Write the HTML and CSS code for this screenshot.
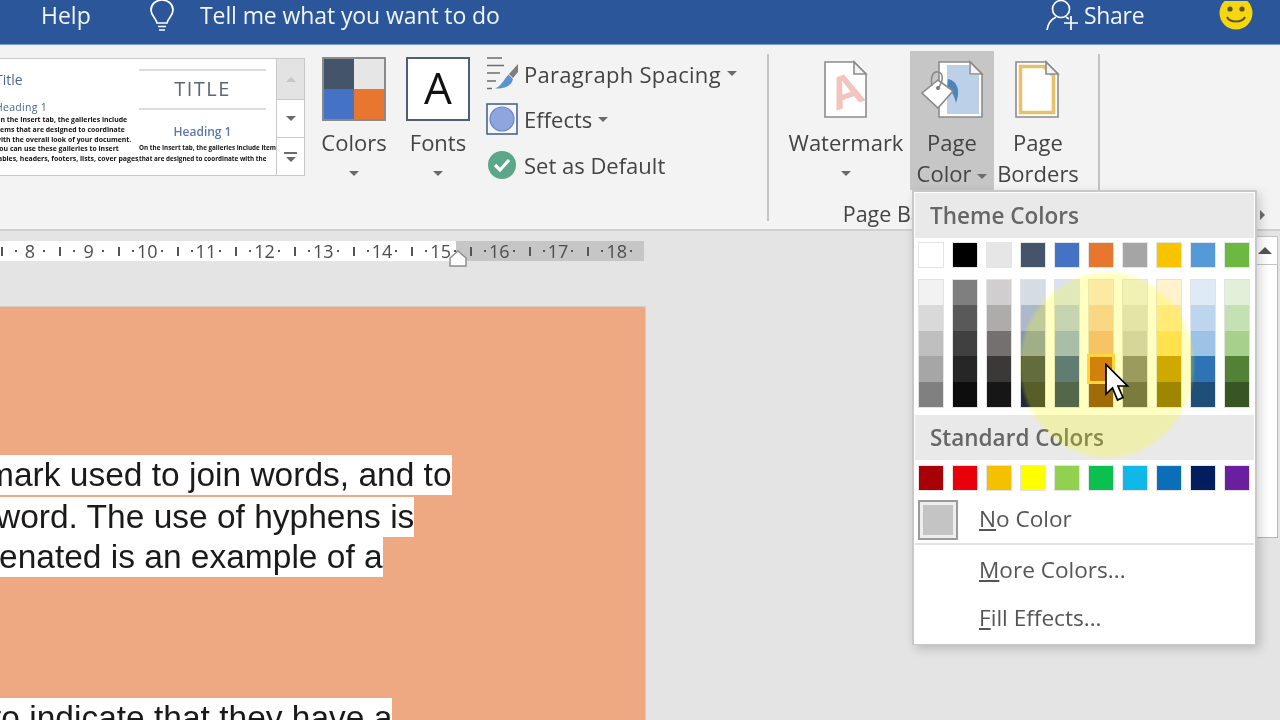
FILE: index.html
```html
<!DOCTYPE html>
<html lang="en">
<head>
<meta charset="utf-8">
<title>Page Color</title>
<link rel="stylesheet" href="styles.css">
</head>
<body>
<div class="app">
  <header class="titlebar">
    <span class="tb-help">Help</span>
    <svg class="tb-bulb" width="26" height="33" viewBox="0 0 26 33" fill="none" stroke="#fff" stroke-width="1.7"><path d="M8 24 C7 19 2 17 2 11 C2 5 7 1 13 1 C19 1 24 5 24 11 C24 17 19 19 18 24 Z"/><path d="M9 27.5 H17 M10 31 H16"/></svg>
    <span class="tb-tell">Tell me what you want to do</span>
    <svg class="tb-person" width="32" height="32" viewBox="0 0 32 32" fill="none" stroke="#fff" stroke-width="1.7"><circle cx="15" cy="10" r="8.5"/><path d="M1 31 C2 24 6 20 10 18 M20 18 L23 20"/><path d="M25 17 V31 M18 24 H32"/></svg>
    <span class="tb-share">Share</span>
    <svg class="tb-smile" width="34" height="32" viewBox="0 0 34 32"><circle cx="17" cy="12" r="16.5" fill="#f5d60f"/><circle cx="11" cy="8" r="2.6" fill="#5b5320"/><circle cx="23" cy="8" r="2.6" fill="#5b5320"/><path d="M8 16 C11 22 23 22 26 16" fill="none" stroke="#5b5320" stroke-width="2"/></svg>
  </header>

  <section class="ribbon">
    <div class="gallery">
      <div class="thumbs">
        <div class="thumb thumb-a">
          <div class="ta-title">Title</div>
          <div class="ta-head">Heading 1</div>
          <div class="ta-line">On the Insert tab, the galleries include</div>
          <div class="ta-line">items that are designed to coordinate</div>
          <div class="ta-line">with the overall look of your document.</div>
          <div class="ta-line">You can use these galleries to insert</div>
          <div class="ta-line">tables, headers, footers, lists, cover pages,</div>
        </div>
        <div class="thumb thumb-b">
          <div class="tb-title">TITLE</div>
          <div class="tb-head">Heading 1</div>
          <div class="tb-line">On the Insert tab, the galleries include items</div>
          <div class="tb-line">that are designed to coordinate with the</div>
        </div>
      </div>
      <div class="scroller">
        <div class="sc sc-up"><i class="tri tri-up"></i></div>
        <div class="sc sc-down"><i class="tri"></i></div>
        <div class="sc sc-more"><b class="sc-bar"></b><i class="tri"></i></div>
      </div>
    </div>

    <div class="big big-colors">
      <div class="colors-icon"><i class="k-44546a"></i><i class="k-e7e6e6"></i><i class="k-4472c4"></i><i class="k-e8762f"></i></div>
      <span class="big-label">Colors</span>
      <i class="tri tri-big"></i>
    </div>
    <div class="big big-fonts">
      <div class="fonts-icon">A</div>
      <span class="big-label">Fonts</span>
      <i class="tri tri-big"></i>
    </div>

    <div class="smalls">
      <div class="small">
        <svg class="small-icon" width="32" height="34" viewBox="0 0 32 34" fill="none"><path d="M1 1 H16 M1 8.5 H18 M1 16 H14 M1 24 H10 M1 31.5 H6" stroke="#6d6d6d" stroke-width="1.6"/><path d="M32 7 L23 17 L27 21 L32 15 Z" fill="#7d7d7d"/><path d="M22.5 17.5 L27 22 C26 28 20 32 9 31.5 C15 29 17 24 22.5 17.5 Z" fill="#5b93cf"/></svg>
        <span class="wide">Paragraph Spacing</span><i class="tri tri-small"></i>
      </div>
      <div class="small">
        <svg class="small-icon" width="32" height="32" viewBox="0 0 32 32"><rect x="1" y="1" width="30" height="30" fill="#f6f6f6" stroke="#4a6497" stroke-width="1.6"/><circle cx="16" cy="16" r="12" fill="#8fa5dd" stroke="#6d86cb" stroke-width="1.2"/></svg>
        <span>Effects</span><i class="tri tri-small"></i>
      </div>
      <div class="small">
        <svg class="small-icon" width="32" height="30" viewBox="0 0 32 30"><circle cx="16" cy="15" r="14" fill="#5ba78a"/><path d="M9 15 L14 20 L23 10" fill="none" stroke="#fff" stroke-width="3.2"/></svg>
        <span>Set as Default</span>
      </div>
    </div>

    <div class="sep sep-a"></div>

    <div class="page-group">
      <div class="page-btns">
        <div class="big big-water">
          <svg class="doc-icon" width="64" height="64" viewBox="0 0 64 64" fill="none"><path d="M11 5 H40 L52 17 V60 H11 Z" fill="#fff" stroke="#8c8c8c" stroke-width="1.6"/><path d="M40 5 V17 H52 L40 5 Z" stroke="#8c8c8c" stroke-width="1.6" fill="#f3f3f3"/><text class="water-a" x="15" y="50" transform="rotate(-20 30 34)">A</text></svg>
          <span class="big-label">Watermark</span>
          <i class="tri tri-big"></i>
        </div>
        <div class="big big-color">
          <svg class="doc-icon" width="64" height="64" viewBox="0 0 64 64" fill="none"><path d="M19 5 H50 L62 17 V60 H19 Z" fill="#fff" stroke="#8c8c8c" stroke-width="1.6"/><path d="M27 8 H49 V18 H59 V57 H27 Z" fill="#bcd0e8"/><path d="M50 5 V17 H62 L50 5 Z" stroke="#8c8c8c" stroke-width="1.6" fill="#f3f3f3"/><path d="M28 22 C37 24 41 33 36 46 C34 38 32 34 27 31 Z" fill="#4a86bb"/><path d="M2 36 L18 23 L33 34 L18 51 Z" fill="#fff" stroke="#8a8a8a" stroke-width="1.6"/><path d="M12 29 C10 18 14 14 18 15 C23 16 24 22 19 30" stroke="#8a8a8a" stroke-width="1.6"/><circle cx="18" cy="31" r="2" fill="#777"/></svg>
          <span class="big-label two">Page<br>Color<i class="tri tri-inline"></i></span>
        </div>
        <div class="big big-borders">
          <svg class="doc-icon" width="64" height="64" viewBox="0 0 64 64" fill="none"><path d="M10 5 H40 L52 17 V60 H10 Z" fill="#fff" stroke="#8c8c8c" stroke-width="1.6"/><path d="M14.500 9.500 H38 L47.500 19 V55.500 H14.500 Z" stroke="#e8c16c" stroke-width="3.600"/><path d="M40 5 V17 H52 L40 5 Z" stroke="#8c8c8c" stroke-width="1.6" fill="#f3f3f3"/></svg>
          <span class="big-label two">Page<br>Borders</span>
        </div>
      </div>
      <div class="group-label">Page Background</div>
    </div>

    <div class="sep sep-b"></div>
    <i class="expand"></i>
  </section>

  <section class="workspace">
    <div class="doc">
      <div class="ruler">
        <div class="rc"><i class="bar"></i><i class="dot"></i><b>8</b><i class="dot"></i></div>
        <div class="rc"><i class="bar"></i><i class="dot"></i><b>9</b><i class="dot"></i></div>
        <div class="rc"><i class="bar"></i><i class="dot"></i><b>10</b><i class="dot"></i></div>
        <div class="rc"><i class="bar"></i><i class="dot"></i><b>11</b><i class="dot"></i></div>
        <div class="rc"><i class="bar"></i><i class="dot"></i><b>12</b><i class="dot"></i></div>
        <div class="rc"><i class="bar"></i><i class="dot"></i><b>13</b><i class="dot"></i></div>
        <div class="rc"><i class="bar"></i><i class="dot"></i><b>14</b><i class="dot"></i></div>
        <div class="rc"><i class="bar"></i><i class="dot"></i><b>15</b><i class="dot"></i></div>
        <div class="rc"><i class="bar"></i><i class="dot"></i><b>16</b><i class="dot"></i></div>
        <div class="rc"><i class="bar"></i><i class="dot"></i><b>17</b><i class="dot"></i></div>
        <div class="rc"><i class="bar"></i><i class="dot"></i><b>18</b><i class="dot"></i></div>
        <svg class="indent" width="18" height="17" viewBox="0 0 18 17"><path d="M9 1 L17 8 V16 H1 V8 Z" fill="#fff" stroke="#8a8a8a" stroke-width="1.4"/></svg>
      </div>
      <div class="page">
        <p class="sel-line first">mark used to join words, and to</p>
        <p class="sel-line second">word. The use of hyphens is</p>
        <p class="sel-line third">enated is an example of a</p>
        <p class="sel-line last">to indicate that they have a</p>
      </div>
    </div>
    <div class="vscroll">
      <div class="vs-btn"><i class="tri tri-up tri-dark"></i></div>
      <div class="vs-thumb"></div>
    </div>
  </section>

  <aside class="menu">
    <div class="menu-head">Theme Colors</div>
    <div class="swatches">
      <i class="k-ffffff"></i><i class="k-000000"></i><i class="k-e7e6e6"></i><i class="k-44546a"></i><i class="k-4472c4"></i><i class="k-e8762f"></i><i class="k-a5a5a5"></i><i class="k-ffc000"></i><i class="k-5b9bd5"></i><i class="k-70ad47"></i>
    </div>
    <div class="shades">
      <div class="col"><i class="k-f2f2f2"></i><i class="k-d9d9d9"></i><i class="k-bfbfbf"></i><i class="k-a6a6a6"></i><i class="k-808080"></i></div>
      <div class="col"><i class="k-7f7f7f"></i><i class="k-595959"></i><i class="k-404040"></i><i class="k-262626"></i><i class="k-0d0d0d"></i></div>
      <div class="col"><i class="k-d0cece"></i><i class="k-aeabab"></i><i class="k-757070"></i><i class="k-3b3838"></i><i class="k-171616"></i></div>
      <div class="col"><i class="k-d6dce4"></i><i class="k-adb9ca"></i><i class="k-8496b0"></i><i class="k-323f4f"></i><i class="k-222b35"></i></div>
      <div class="col"><i class="k-d9e2f3"></i><i class="k-b4c6e7"></i><i class="k-8eaadb"></i><i class="k-2f5496"></i><i class="k-1f3763"></i></div>
      <div class="col"><i class="k-fbe4d5"></i><i class="k-f7caac"></i><i class="k-f4b083"></i><i class="k-c45911 picked"></i><i class="k-833c0b"></i></div>
      <div class="col"><i class="k-ededed"></i><i class="k-dbdbdb"></i><i class="k-c9c9c9"></i><i class="k-7b7b7b"></i><i class="k-525252"></i></div>
      <div class="col"><i class="k-fff2cc"></i><i class="k-ffe599"></i><i class="k-ffd966"></i><i class="k-bf8f00"></i><i class="k-7f6000"></i></div>
      <div class="col"><i class="k-deeaf6"></i><i class="k-bdd6ee"></i><i class="k-9cc2e5"></i><i class="k-2e74b5"></i><i class="k-1f4e79"></i></div>
      <div class="col"><i class="k-e2efd9"></i><i class="k-c5e0b3"></i><i class="k-a8d08d"></i><i class="k-538135"></i><i class="k-375623"></i></div>
    </div>
    <div class="menu-head head-std">Standard Colors</div>
    <div class="swatches swatches-std">
      <i class="k-a90008"></i><i class="k-e8000a"></i><i class="k-f5c000"></i><i class="k-ffff00"></i><i class="k-92d050"></i><i class="k-0cc050"></i><i class="k-10b8e8"></i><i class="k-0a6eb8"></i><i class="k-021e5e"></i><i class="k-6a1fa0"></i>
    </div>
    <div class="no-color"><span class="nc-box"><i></i></span><span class="item-text"><u>N</u>o Color</span></div>
    <div class="menu-sep"></div>
    <div class="menu-item"><u>M</u>ore Colors...</div>
    <div class="menu-item"><u>F</u>ill Effects...</div>
    <div class="glow"></div>
    <svg class="cursor" width="26" height="40" viewBox="0 0 26 40"><path d="M2 1.500 V31 L8.500 25 L13.500 37 L19 34.500 L14 23 H23.500 Z" fill="#fff" stroke="#000" stroke-width="1.7"/></svg>
  </aside>
</div>
</body>
</html>
```

FILE: styles.css
```css
* { box-sizing: border-box; }
html, body { margin: 0; padding: 0; width: 1280px; height: 720px; overflow: hidden; }
body { font-family: "Open Sans", "Liberation Sans", sans-serif; color: #444; background: #e4e4e4; }
i { display: block; }

.app { position: relative; width: 1280px; height: 720px; overflow: hidden; filter: blur(0.45px); }

/* title bar */
.titlebar { height: 45px; background: #2b579a; border-bottom: 1px solid #7d9cc9; display: flex; align-items: flex-start; color: #f1f5fb; font-size: 23px; line-height: 30px; }
.tb-help { margin-left: 41px; width: 108px; }
.tb-bulb { margin-top: -1px; }
.tb-tell { margin-left: 25px; letter-spacing: -0.1px; }
.tb-person { margin-left: auto; margin-top: -1px; }
.tb-share { margin-left: 6px; width: 135px; letter-spacing: -0.3px; }
.tb-smile { margin-right: 27px; margin-top: 1px; flex: none; }

/* ribbon */
.ribbon { position: relative; height: 186px; background: #f3f3f3; border-bottom: 2px solid #cfcfcf; display: flex; align-items: flex-start; }
.gallery { margin: 13px 0 0 -10px; width: 315px; height: 118px; display: flex; flex: none; background: #fff; border: 1px solid #c8c8c8; }
.thumbs { flex: 1; display: flex; overflow: hidden; color: #111; }
.thumb { height: 100%; overflow: hidden; white-space: nowrap; }
.thumb-a { width: 148px; padding: 12px 0 0 4px; }
.ta-title { font-size: 14px; line-height: 18px; color: #4b6596; }
.ta-head { font-size: 10.5px; line-height: 14px; margin: 11px 0 1px; color: #4b6596; letter-spacing: .3px; }
.ta-line { font-size: 6.9px; line-height: 9.8px; font-weight: 700; }
.thumb-b { flex: 1; margin-top: 10px; padding: 0; text-align: center; }
.tb-title { height: 41px; margin: 0 10px 0 0; border-top: 2px solid #dcdcdc; border-bottom: 2px solid #dcdcdc; font-size: 20px; line-height: 36px; color: #5d6677; letter-spacing: 1.5px; font-weight: 400; }
.tb-head { font-size: 12px; line-height: 16px; margin: 14px 10px 2px 0; color: #5d78ab; font-weight: 600; }
.tb-line { font-size: 6.3px; line-height: 11px; font-weight: 700; margin-right: 10px; }
.scroller { width: 28px; display: flex; flex-direction: column; border-left: 1px solid #c8c8c8; }
.sc { flex: 1; display: flex; flex-direction: column; align-items: center; justify-content: center; gap: 3px; border-top: 1px solid #c8c8c8; }
.sc-up { background: #e3e3e3; border-top: 0; flex: 1.1; }
.sc-bar { width: 13px; height: 2px; background: #6b6b6b; }

.tri { width: 0; height: 0; border-left: 5px solid transparent; border-right: 5px solid transparent; border-top: 5px solid #6b6b6b; }
.tri-up { border-top: 0; border-bottom: 5px solid #c6c6c6; }
.tri-dark { border-left-width: 7px; border-right-width: 7px; border-bottom: 7px solid #555; }
.tri-big { margin-top: 13px; }
.tri-small { display: inline-block; margin-left: 6px; vertical-align: middle; }
.tri-inline { display: inline-block; margin-left: 6px; vertical-align: middle; }

.big { flex: none; margin-top: 6px; height: 139px; padding-top: 6px; display: flex; flex-direction: column; align-items: center; color: #444; }
.big-label { display: block; margin-top: 6px; font-size: 22px; line-height: 31px; text-align: center; white-space: nowrap; }
.big-colors { width: 68px; margin-left: 15px; }
.big-fonts { width: 68px; margin-left: 16px; }
.colors-icon { width: 64px; height: 64px; border: 2px solid #8a8a8a; display: grid; grid-template-columns: 1fr 1fr; grid-template-rows: 1fr 1fr; background: #8a8a8a; }
.fonts-icon { width: 64px; height: 64px; border: 2px solid #4e5d78; background: #fff; color: #111; font-size: 44px; line-height: 56px; text-align: center; }

.smalls { flex: none; margin: 6px 0 0 14px; width: 280px; display: flex; flex-direction: column; }
.small { height: 45.5px; display: flex; align-items: center; font-size: 22px; color: #444; white-space: nowrap; }
.small-icon { width: 32px; margin-right: 6px; flex: none; }
.wide { letter-spacing: .3px; }

.sep { flex: none; width: 2px; margin-top: 9px; background: #c4c4c4; }
.sep-a { height: 167px; margin-left: 1px; }
.sep-b { height: 137px; margin-left: 16px; }

.page-group { flex: none; margin-left: 17px; width: 296px; display: flex; flex-direction: column; }
.page-btns { display: flex; }
.big-water { width: 124px; padding-right: 4px; }
.big-color { width: 84px; background: #c6c6c6; }
.big-borders { width: 88px; }
.doc-icon { flex: none; }
.water-a { font-family: "Liberation Sans", sans-serif; font-size: 46px; font-weight: 700; fill: #f2c4bc; }
.group-label { text-align: center; font-size: 21.5px; line-height: 30px; margin-top: 9px; padding-right: 8px; white-space: nowrap; }
.expand { position: absolute; left: 1260px; top: 165px; width: 0; height: 0; border-top: 5px solid transparent; border-bottom: 5px solid transparent; border-left: 5px solid #6b6b6b; }

/* workspace */
.workspace { height: 489px; display: flex; background: #e4e4e4; }
.doc { flex: 1; padding-top: 10px; overflow: hidden; }
.ruler { position: relative; width: 644px; height: 20px; padding-left: 0.5px; display: flex; color: #4c4c4c; background: linear-gradient(to right, #fff 456px, #c6c6c6 456px); }
.rc { flex: none; width: 58.7px; height: 20px; display: grid; grid-template-columns: 14px 2px 1fr 2px 14px; align-items: center; justify-items: center; font-size: 18px; line-height: 20px; }
.rc b { font-weight: 400; }
.bar { width: 2px; height: 9px; background: #555; justify-self: start; }
.dot { width: 2px; height: 2px; background: #555; }
.indent { position: absolute; left: 449px; top: 9px; }

.page { width: 646px; height: 415px; margin-top: 45px; background: #eea982; border-top: 1px solid #cfcfcf; border-right: 1px solid #cfcfcf; padding-top: 148px; font-family: "Liberation Sans", Arial, sans-serif; font-size: 33.5px; color: #1a1a1a; overflow: hidden; }
.sel-line { width: max-content; margin: 0; height: 40px; line-height: 40px; background: #fff; white-space: nowrap; }
.first { margin: 0 0 2px -14px; }
.second { margin-left: -4px; }
.third { margin-left: -1px; }
.last { margin: 121px 0 0 -8px; }

.vscroll { width: 28px; flex: none; padding: 5px 2px 0 0; display: flex; flex-direction: column; }
.vs-btn { height: 29px; background: #fff; border: 1px solid #c4c4c4; display: flex; align-items: center; justify-content: center; }
.vs-thumb { height: 273px; background: #fff; border: 1px solid #b8b8b8; border-top: 0; }

/* colour menu */
.menu { position: absolute; left: 912px; top: 190px; width: 345px; height: 455px; background: #fff; border: 2px solid #c8c8c8; border-bottom-width: 1px; box-shadow: 3px 4px 10px rgba(0,0,0,.18); padding: 1px 1px 0; }
.menu-head { height: 45px; background: #e9e9e9; padding-left: 15px; font-size: 22.5px; font-weight: 600; line-height: 46px; color: #666; }
.swatches { display: flex; gap: 10px; padding: 5px 0 0 4px; }
.swatches i { width: 24px; height: 24px; box-shadow: 0 0 0 1px #e4e4e4; }
.swatches-std { padding-top: 6px; }
.shades { display: flex; gap: 10px; padding: 13px 0 0 4px; }
.col { width: 24px; height: 127px; display: flex; flex-direction: column; box-shadow: 0 0 0 1px #e2e2e2; }
.col i { flex: 1; }
.head-std { margin-top: 8px; }
.picked { outline: 3px solid #fbc94e; outline-offset: -1px; position: relative; }
.no-color { height: 53px; display: flex; align-items: center; padding: 6px 0 0 3px; }
.nc-box { width: 40px; height: 40px; border: 2px solid #9a9a9a; background: #eee; padding: 3px; flex: none; }
.nc-box i { width: 100%; height: 100%; background: #c4c4c4; }
.item-text { margin: 0 0 3px 21px; font-size: 22.6px; color: #555; }
.menu-sep { height: 2px; background: #e3e3e3; }
.menu-item { height: 48px; padding-left: 64px; font-size: 22.6px; line-height: 50px; color: #555; }
.glow { position: absolute; left: 104px; top: 78px; width: 178px; height: 190px; border-radius: 50%; background: radial-gradient(closest-side, rgba(255,255,0,.24) 95%, rgba(255,255,0,0) 100%); }
.cursor { position: absolute; left: 190px; top: 171px; }

/* swatch colours */
.k-ffffff{background:#fff}.k-000000{background:#000}.k-e7e6e6{background:#e7e6e6}.k-44546a{background:#44546a}.k-4472c4{background:#4472c4}.k-e8762f{background:#e8762f}.k-a5a5a5{background:#a5a5a5}.k-ffc000{background:#f8c400}.k-5b9bd5{background:#5499d8}.k-70ad47{background:#6cb840}
.k-f2f2f2{background:#f2f2f2}.k-d9d9d9{background:#d9d9d9}.k-bfbfbf{background:#bfbfbf}.k-a6a6a6{background:#a6a6a6}.k-808080{background:#808080}
.k-7f7f7f{background:#7f7f7f}.k-595959{background:#595959}.k-404040{background:#404040}.k-262626{background:#262626}.k-0d0d0d{background:#0d0d0d}
.k-d0cece{background:#d0cece}.k-aeabab{background:#aeabab}.k-757070{background:#757070}.k-3b3838{background:#3b3838}.k-171616{background:#171616}
.k-d6dce4{background:#d6dce4}.k-adb9ca{background:#adb9ca}.k-8496b0{background:#8496b0}.k-323f4f{background:#323f4f}.k-222b35{background:#222b35}
.k-d9e2f3{background:#d9e2f3}.k-b4c6e7{background:#b4c6e7}.k-8eaadb{background:#8eaadb}.k-2f5496{background:#2f5496}.k-1f3763{background:#1f3763}
.k-fbe4d5{background:#fbe4d5}.k-f7caac{background:#f7caac}.k-f4b083{background:#f4b083}.k-c45911{background:#c45911}.k-833c0b{background:#833c0b}
.k-ededed{background:#ededed}.k-dbdbdb{background:#dbdbdb}.k-c9c9c9{background:#c9c9c9}.k-7b7b7b{background:#7b7b7b}.k-525252{background:#525252}
.k-fff2cc{background:#fff2cc}.k-ffe599{background:#ffe599}.k-ffd966{background:#ffd966}.k-bf8f00{background:#bf8f00}.k-7f6000{background:#7f6000}
.k-deeaf6{background:#deeaf6}.k-bdd6ee{background:#bdd6ee}.k-9cc2e5{background:#9cc2e5}.k-2e74b5{background:#2e74b5}.k-1f4e79{background:#1f4e79}
.k-e2efd9{background:#e2efd9}.k-c5e0b3{background:#c5e0b3}.k-a8d08d{background:#a8d08d}.k-538135{background:#538135}.k-375623{background:#375623}
.k-a90008{background:#a90008}.k-e8000a{background:#e8000a}.k-f5c000{background:#f5c000}.k-ffff00{background:#ff0}.k-92d050{background:#92d050}.k-0cc050{background:#0cc050}.k-10b8e8{background:#10b8e8}.k-0a6eb8{background:#0a6eb8}.k-021e5e{background:#021e5e}.k-6a1fa0{background:#6a1fa0}
```
